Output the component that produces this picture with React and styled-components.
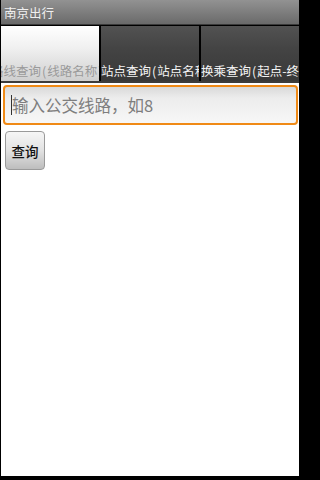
import React from "react";
import styled, { createGlobalStyle } from "styled-components";

const Global = createGlobalStyle`
  html, body { margin: 0; padding: 0; background: #000; }
  body { font-family: "Noto Sans CJK SC", "Noto Sans", sans-serif; }
`;

const Frame = styled.div`
  width: 303px;
  height: 480px;
  box-sizing: border-box;
  background: #000;
  padding: 0 4px 4px 1px;
  display: flex;
`;

const Screen = styled.div`
  flex: 1;
  background: #fff;
  display: flex;
  flex-direction: column;
  overflow: hidden;
`;

const TitleBar = styled.div`
  height: 24px;
  background: linear-gradient(#929292, #6a6a6a);
  border-bottom: 1px solid #3a3a3a;
  display: flex;
  align-items: center;
  padding-left: 3px;
  color: #f0f0f0;
  font-size: 12.5px;
`;

const TabBar = styled.div`
  display: flex;
  gap: 2px;
  height: 55px;
  background: #000;
  padding-top: 1px;
  border-bottom: 2px solid #3c3c3c;
`;

const Tab = styled.div`
  flex: 1;
  display: flex;
  align-items: flex-end;
  overflow: hidden;
  white-space: nowrap;
  padding-bottom: 1px;
  font-size: 12.5px;
  line-height: 18px;
  background: ${(p) =>
    p.$active
      ? "linear-gradient(#ffffff 0%, #f0f0f0 40%, #cfcfcf 100%)"
      : "linear-gradient(#525252 0%, #444 40%, #383838 100%)"};
  color: ${(p) => (p.$active ? "#9a9a9a" : "#f4f4f4")};
`;

const TabLabel = styled.span`
  margin-left: ${(p) => p.$shift || 0}px;
`;

const Paren = styled.span`
  padding: 0 1px;
`;

const Body = styled.div`
  padding: 2px 1px 0 2px;
  display: flex;
  flex-direction: column;
  align-items: flex-start;
  gap: 6px;
`;

const Input = styled.div`
  align-self: stretch;
  height: 40px;
  box-sizing: border-box;
  border: 2px solid #f08a16;
  border-radius: 4px;
  background: linear-gradient(#d9d9d9 0%, #ececec 30%, #f7f7f7 100%);
  display: flex;
  align-items: center;
  padding-left: 6px;
  color: #7e7e7e;
  font-size: 16.5px;
`;

const Caret = styled.span`
  display: inline-block;
  width: 1px;
  height: 20px;
  background: #333;
`;

const Button = styled.button`
  margin-left: 2px;
  width: 40px;
  height: 39px;
  border: 1px solid #9a9a9a;
  border-radius: 4px;
  background: linear-gradient(#f6f6f6 0%, #e2e2e2 50%, #bdbdbd 100%);
  font-family: inherit;
  font-size: 13.5px;
  font-weight: 500;
  color: #111;
  padding: 0;
`;

const labels = [
  ["路线查询", "线路名称"],
  ["站点查询", "站点名称"],
  ["换乘查询", "起点-终点"],
];

export default function App() {
  return (
    <>
      <Global />
      <Frame>
        <Screen>
          <TitleBar>南京出行</TitleBar>
          <TabBar>
            {labels.map(([a, b], i) => (
              <Tab key={a} $active={i === 0}>
                <TabLabel $shift={i === 0 ? -10 : 0}>
                  {a}
                  <Paren>(</Paren>
                  {b}
                  <Paren>)</Paren>
                </TabLabel>
              </Tab>
            ))}
          </TabBar>
          <Body>
            <Input>
              <Caret />
              输入公交线路，如8
            </Input>
            <Button>查询</Button>
          </Body>
        </Screen>
      </Frame>
    </>
  );
}
